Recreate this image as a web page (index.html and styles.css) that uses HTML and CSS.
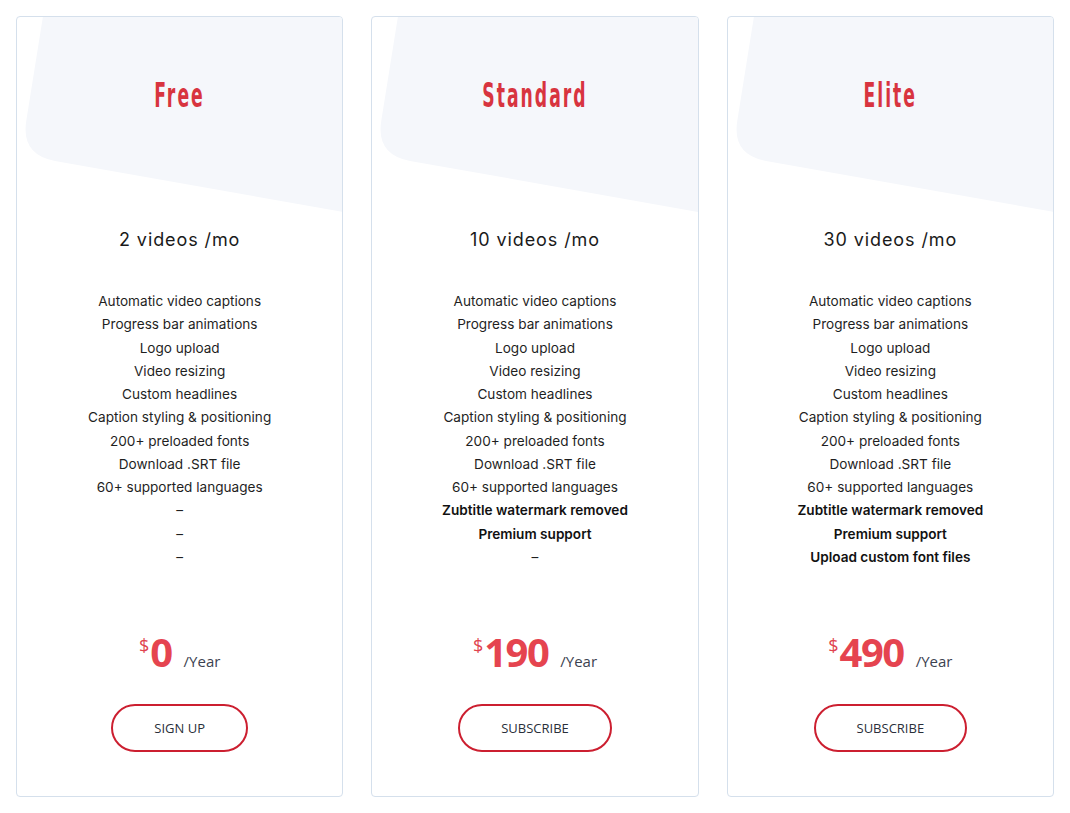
FILE: index.html
```html
<!DOCTYPE html>
<html>
<head>
<meta charset="utf-8">
<link rel="stylesheet" href="styles.css">
</head>
<body>
<div class="plans">
  <div class="card">
    <svg class="blob" viewBox="0 0 327 200" preserveAspectRatio="none"><path d="M26 0 L9.4 103.3 Q3.7 137.8 38.2 143.9 L328 195 V0 Z"/></svg>
    <h2 class="title">Free</h2>
    <div class="quota">2 videos /mo</div>
    <ul class="features">
      <li>Automatic video captions</li>
      <li>Progress bar animations</li>
      <li>Logo upload</li>
      <li>Video resizing</li>
      <li>Custom headlines</li>
      <li>Caption styling &amp; positioning</li>
      <li>200+ preloaded fonts</li>
      <li>Download .SRT file</li>
      <li>60+ supported languages</li>
      <li>–</li>
      <li>–</li>
      <li>–</li>
    </ul>
    <div class="price"><span class="cur">$</span><span class="amount">0</span><span class="per">/Year</span></div>
    <a class="btn">SIGN UP</a>
  </div>
  <div class="card">
    <svg class="blob" viewBox="0 0 327 200" preserveAspectRatio="none"><path d="M26 0 L9.4 103.3 Q3.7 137.8 38.2 143.9 L328 195 V0 Z"/></svg>
    <h2 class="title">Standard</h2>
    <div class="quota">10 videos /mo</div>
    <ul class="features">
      <li>Automatic video captions</li>
      <li>Progress bar animations</li>
      <li>Logo upload</li>
      <li>Video resizing</li>
      <li>Custom headlines</li>
      <li>Caption styling &amp; positioning</li>
      <li>200+ preloaded fonts</li>
      <li>Download .SRT file</li>
      <li>60+ supported languages</li>
      <li class="strong">Zubtitle watermark removed</li>
      <li class="strong">Premium support</li>
      <li>–</li>
    </ul>
    <div class="price"><span class="cur">$</span><span class="amount">190</span><span class="per">/Year</span></div>
    <a class="btn">SUBSCRIBE</a>
  </div>
  <div class="card">
    <svg class="blob" viewBox="0 0 327 200" preserveAspectRatio="none"><path d="M26 0 L9.4 103.3 Q3.7 137.8 38.2 143.9 L328 195 V0 Z"/></svg>
    <h2 class="title">Elite</h2>
    <div class="quota">30 videos /mo</div>
    <ul class="features">
      <li>Automatic video captions</li>
      <li>Progress bar animations</li>
      <li>Logo upload</li>
      <li>Video resizing</li>
      <li>Custom headlines</li>
      <li>Caption styling &amp; positioning</li>
      <li>200+ preloaded fonts</li>
      <li>Download .SRT file</li>
      <li>60+ supported languages</li>
      <li class="strong">Zubtitle watermark removed</li>
      <li class="strong">Premium support</li>
      <li class="strong">Upload custom font files</li>
    </ul>
    <div class="price"><span class="cur">$</span><span class="amount">490</span><span class="per">/Year</span></div>
    <a class="btn">SUBSCRIBE</a>
  </div>
</div>
</body>
</html>
```
FILE: styles.css
```css
* { box-sizing: border-box; }
html, body { margin: 0; background: #fff; }
body { padding: 16px; font-family: Inter, "Noto Sans", sans-serif; color: #1f1f1f; }
.plans {
  display: grid;
  grid-template-columns: repeat(3, 1fr);
  gap: 28px;
}
.card {
  position: relative;
  height: 781px;
  border: 1px solid #d5e0ec;
  border-radius: 4px;
  display: flex;
  flex-direction: column;
  align-items: center;
  overflow: hidden;
}
.blob {
  position: absolute;
  left: 0; top: 0;
  width: 100%;
  height: 200px;
}
.blob path { fill: #f5f7fb; }
.title {
  position: relative;
  margin: 58px 0 0;
  font-family: "DejaVu Sans Condensed", "DejaVu Sans", sans-serif;
  font-stretch: condensed;
  font-weight: 700;
  font-size: 33px;
  line-height: 42px;
  color: #d8343f;
  letter-spacing: 3.5px;
  transform: scaleX(0.58);
}
.quota {
  margin-top: 111px;
  font-size: 18px;
  line-height: 24px;
  letter-spacing: 0.9px;
  color: #1a1a1a;
}
.features {
  list-style: none;
  margin: 38px 0 0;
  padding: 0;
  text-align: center;
  font-size: 13.6px;
  line-height: 23.25px;
  color: #1f1f1f;
}
.features .strong { font-weight: 600; color: #111; }
.price {
  margin-top: 59px;
  display: flex;
  align-items: baseline;
  font-family: "Open Sans", sans-serif;
}
.cur {
  align-self: flex-start;
  font-size: 18px;
  line-height: 20px;
  color: #e0434f;
  margin-top: 7px;
  margin-right: 1px;
}
.amount {
  font-size: 40px;
  line-height: 48px;
  font-weight: 700;
  letter-spacing: -1.5px;
  color: #e5444f;
}
.per {
  margin-left: 12px;
  font-size: 15px;
  color: #3c4250;
}
.btn {
  margin-top: 28px;
  height: 48px;
  padding: 0 41px;
  border: 2px solid #cc1f30;
  border-radius: 24px;
  display: flex;
  align-items: center;
  font-family: "Open Sans", sans-serif;
  font-size: 13px;
  color: #2a2f3a;
  cursor: pointer;
}
```
